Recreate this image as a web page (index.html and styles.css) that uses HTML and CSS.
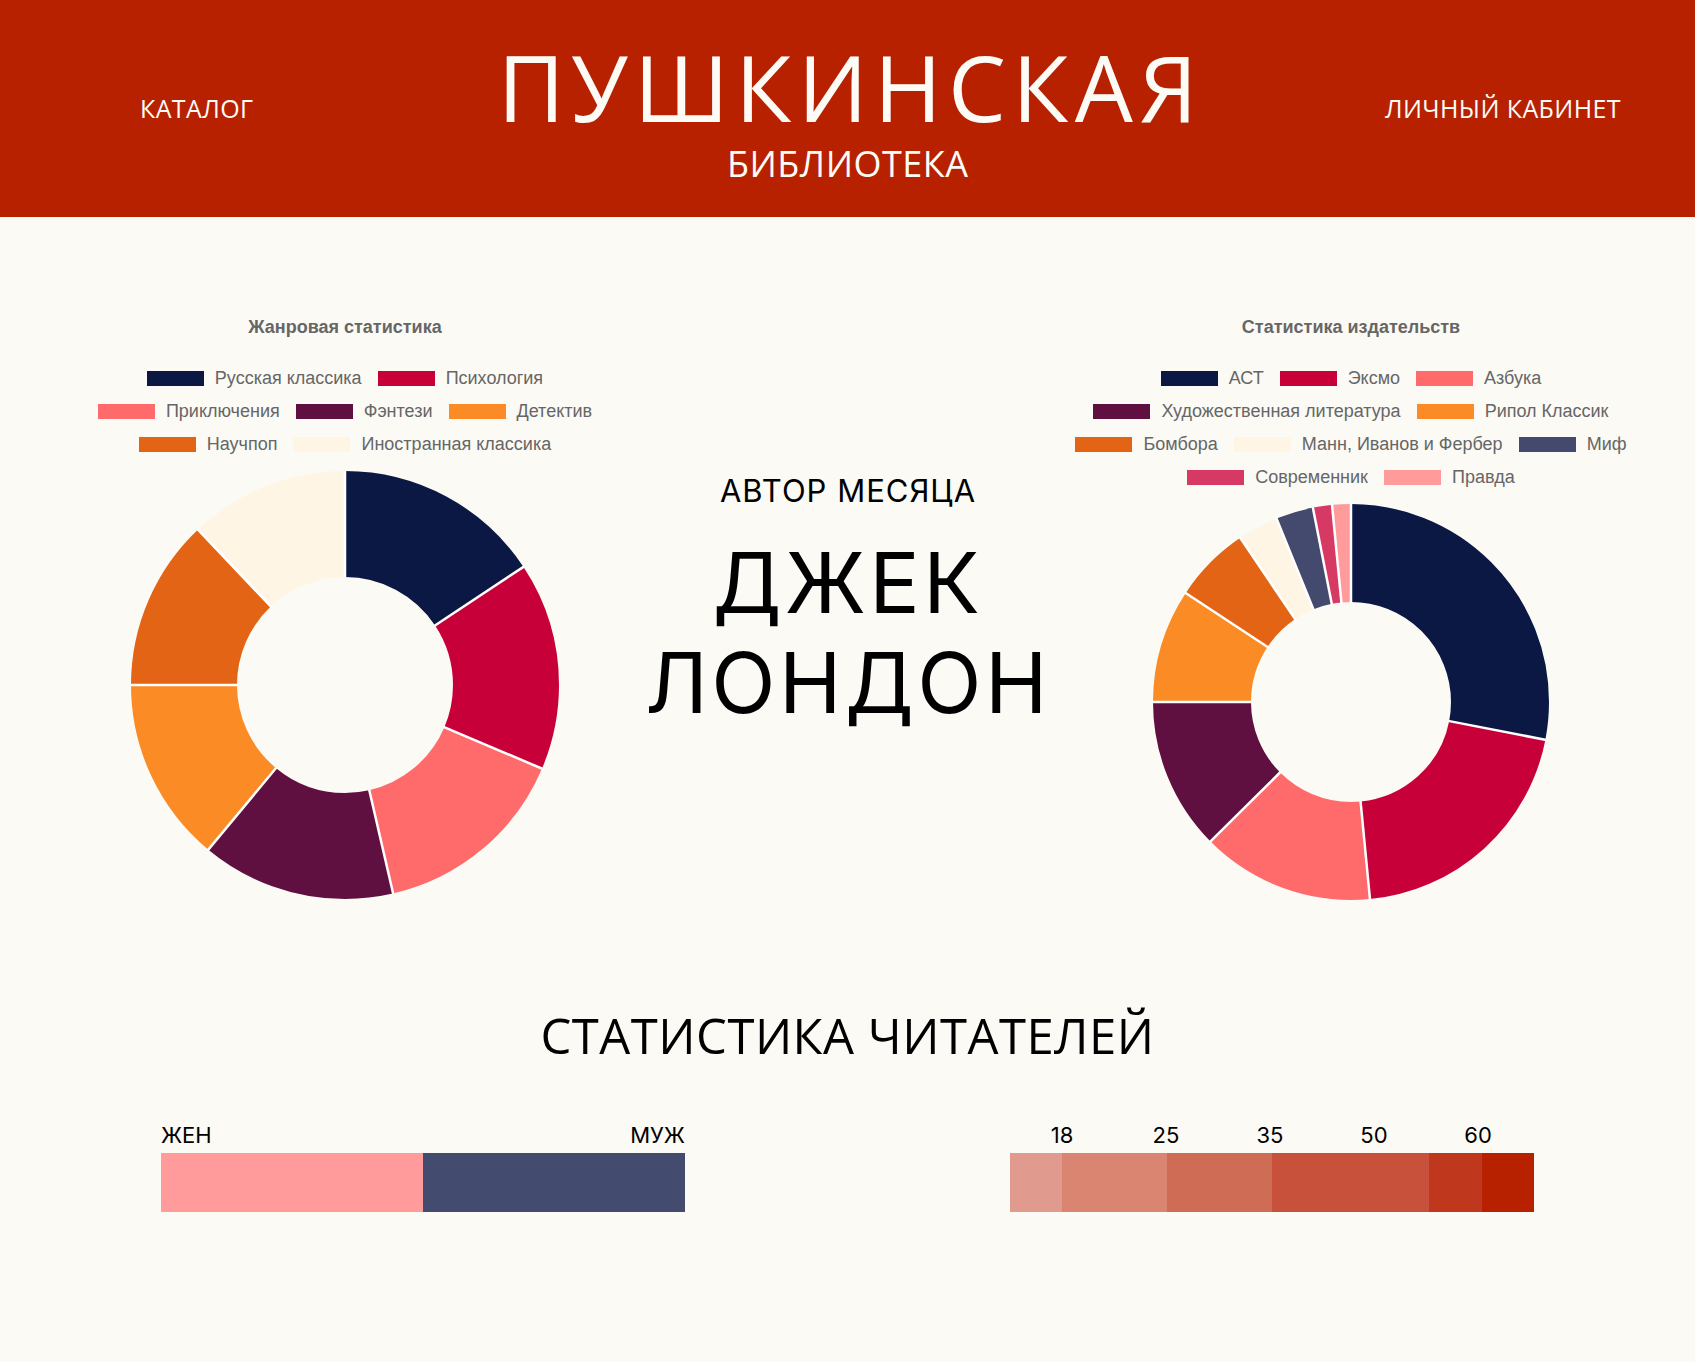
FILE: index.html
```html
<!DOCTYPE html>
<html lang="ru">
<head>
<meta charset="utf-8">
<title>Пушкинская библиотека</title>
<link rel="stylesheet" href="styles.css">
</head>
<body>
<header class="header">
  <a class="nav nav-left" href="#">КАТАЛОГ</a>
  <div class="brand">
    <div class="brand-title">ПУШКИНСКАЯ</div>
    <div class="brand-sub">БИБЛИОТЕКА</div>
  </div>
  <a class="nav nav-right" href="#">ЛИЧНЫЙ КАБИНЕТ</a>
</header>

<main>
  <section class="top">
    <div class="chart">
      <div class="chart-title">Жанровая статистика</div>
      <div class="legend">
        <div class="legend-row">
          <span class="legend-item"><i class="swatch c-navy"></i>Русская классика</span>
          <span class="legend-item"><i class="swatch c-red"></i>Психология</span>
        </div>
        <div class="legend-row">
          <span class="legend-item"><i class="swatch c-pink"></i>Приключения</span>
          <span class="legend-item"><i class="swatch c-purple"></i>Фэнтези</span>
          <span class="legend-item"><i class="swatch c-orange"></i>Детектив</span>
        </div>
        <div class="legend-row">
          <span class="legend-item"><i class="swatch c-dorange"></i>Научпоп</span>
          <span class="legend-item"><i class="swatch c-cream"></i>Иностранная классика</span>
        </div>
      </div>
      <svg class="donut" width="432" height="432" viewBox="0 0 432 432">
        <g transform="rotate(-90 216 216)" fill="none" stroke-width="106">
          <circle cx="216" cy="216" r="161" stroke="#0b1844" stroke-dasharray="158.77 1100" stroke-dashoffset="0"/>
          <circle cx="216" cy="216" r="161" stroke="#c70039" stroke-dasharray="158.77 1100" stroke-dashoffset="-158.77"/>
          <circle cx="216" cy="216" r="161" stroke="#ff6b6b" stroke-dasharray="151.74 1100" stroke-dashoffset="-317.54"/>
          <circle cx="216" cy="216" r="161" stroke="#5f0f40" stroke-dasharray="148.09 1100" stroke-dashoffset="-469.28"/>
          <circle cx="216" cy="216" r="161" stroke="#fb8b24" stroke-dasharray="141.34 1100" stroke-dashoffset="-617.37"/>
          <circle cx="216" cy="216" r="161" stroke="#e36414" stroke-dasharray="130.95 1100" stroke-dashoffset="-758.71"/>
          <circle cx="216" cy="216" r="161" stroke="#fff5e4" stroke-dasharray="121.96 1100" stroke-dashoffset="-889.66"/>
        </g>
        <g stroke="#ffffff" stroke-width="2.5">
          <line x1="216" y1="109" x2="216" y2="1"/>
          <line x1="216" y1="109" x2="216" y2="1" transform="rotate(56.5 216 216)"/>
          <line x1="216" y1="109" x2="216" y2="1" transform="rotate(113 216 216)"/>
          <line x1="216" y1="109" x2="216" y2="1" transform="rotate(167 216 216)"/>
          <line x1="216" y1="109" x2="216" y2="1" transform="rotate(219.7 216 216)"/>
          <line x1="216" y1="109" x2="216" y2="1" transform="rotate(270 216 216)"/>
          <line x1="216" y1="109" x2="216" y2="1" transform="rotate(316.6 216 216)"/>
        </g>
      </svg>
    </div>

    <div class="author">
      <div class="author-label">АВТОР МЕСЯЦА</div>
      <div class="author-name">ДЖЕК<br>ЛОНДОН</div>
    </div>

    <div class="chart">
      <div class="chart-title">Статистика издательств</div>
      <div class="legend">
        <div class="legend-row">
          <span class="legend-item"><i class="swatch c-navy"></i>АСТ</span>
          <span class="legend-item"><i class="swatch c-red"></i>Эксмо</span>
          <span class="legend-item"><i class="swatch c-pink"></i>Азбука</span>
        </div>
        <div class="legend-row">
          <span class="legend-item"><i class="swatch c-purple"></i>Художественная литература</span>
          <span class="legend-item"><i class="swatch c-orange"></i>Рипол Классик</span>
        </div>
        <div class="legend-row">
          <span class="legend-item"><i class="swatch c-dorange"></i>Бомбора</span>
          <span class="legend-item"><i class="swatch c-cream"></i>Манн, Иванов и Фербер</span>
          <span class="legend-item"><i class="swatch c-slate"></i>Миф</span>
        </div>
        <div class="legend-row">
          <span class="legend-item"><i class="swatch c-rose"></i>Современник</span>
          <span class="legend-item"><i class="swatch c-light"></i>Правда</span>
        </div>
      </div>
      <svg class="donut" width="400" height="400" viewBox="0 0 400 400">
        <g transform="rotate(-90 200 200)" fill="none" stroke-width="98">
          <circle cx="200" cy="200" r="149" stroke="#0b1844" stroke-dasharray="262.65 1000" stroke-dashoffset="0"/>
          <circle cx="200" cy="200" r="149" stroke="#c70039" stroke-dasharray="191.14 1000" stroke-dashoffset="-262.65"/>
          <circle cx="200" cy="200" r="149" stroke="#ff6b6b" stroke-dasharray="131.85 1000" stroke-dashoffset="-453.79"/>
          <circle cx="200" cy="200" r="149" stroke="#5f0f40" stroke-dasharray="116.50 1000" stroke-dashoffset="-585.64"/>
          <circle cx="200" cy="200" r="149" stroke="#fb8b24" stroke-dasharray="86.86 1000" stroke-dashoffset="-702.14"/>
          <circle cx="200" cy="200" r="149" stroke="#e36414" stroke-dasharray="58.77 1000" stroke-dashoffset="-789.00"/>
          <circle cx="200" cy="200" r="149" stroke="#fff5e4" stroke-dasharray="30.95 1000" stroke-dashoffset="-847.77"/>
          <circle cx="200" cy="200" r="149" stroke="#434a6e" stroke-dasharray="28.61 1000" stroke-dashoffset="-878.72"/>
          <circle cx="200" cy="200" r="149" stroke="#d63964" stroke-dasharray="14.56 1000" stroke-dashoffset="-907.33"/>
          <circle cx="200" cy="200" r="149" stroke="#ff9b9b" stroke-dasharray="14.30 1000" stroke-dashoffset="-921.89"/>
        </g>
        <g stroke="#ffffff" stroke-width="2.5">
          <line x1="200" y1="101" x2="200" y2="1"/>
          <line x1="200" y1="101" x2="200" y2="1" transform="rotate(101 200 200)"/>
          <line x1="200" y1="101" x2="200" y2="1" transform="rotate(174.5 200 200)"/>
          <line x1="200" y1="101" x2="200" y2="1" transform="rotate(225.2 200 200)"/>
          <line x1="200" y1="101" x2="200" y2="1" transform="rotate(270 200 200)"/>
          <line x1="200" y1="101" x2="200" y2="1" transform="rotate(303.4 200 200)"/>
          <line x1="200" y1="101" x2="200" y2="1" transform="rotate(326 200 200)"/>
          <line x1="200" y1="101" x2="200" y2="1" transform="rotate(337.9 200 200)"/>
          <line x1="200" y1="101" x2="200" y2="1" transform="rotate(348.9 200 200)"/>
          <line x1="200" y1="101" x2="200" y2="1" transform="rotate(354.5 200 200)"/>
        </g>
      </svg>
    </div>
  </section>

  <section class="readers">
    <h2 class="readers-title">СТАТИСТИКА ЧИТАТЕЛЕЙ</h2>
    <div class="bars">
      <div class="bar-block">
        <div class="gender-labels"><span>ЖЕН</span><span>МУЖ</span></div>
        <div class="bar">
          <span class="seg" style="width:50%; background:#ff9b9b"></span>
          <span class="seg" style="width:50%; background:#434b6e"></span>
        </div>
      </div>
      <div class="bar-block">
        <div class="age-labels"><span>18</span><span>25</span><span>35</span><span>50</span><span>60</span></div>
        <div class="bar">
          <span class="seg" style="width:10%; background:#e09b8e"></span>
          <span class="seg" style="width:20%; background:#d98571"></span>
          <span class="seg" style="width:20%; background:#cf6c56"></span>
          <span class="seg" style="width:30%; background:#c7513b"></span>
          <span class="seg" style="width:10%; background:#bf371c"></span>
          <span class="seg" style="width:10%; background:#b72100"></span>
        </div>
      </div>
    </div>
  </section>
</main>
</body>
</html>
```

FILE: styles.css
```css
* { box-sizing: border-box; margin: 0; padding: 0; }

body {
  background: #fbfaf5;
  color: #000;
  font-family: "Inter", "DejaVu Sans", sans-serif;
}

/* Header */
.header {
  height: 217px;
  background: #b72100;
  color: #fcfbf6;
  display: grid;
  grid-template-columns: 1fr auto 1fr;
  align-items: center;
}
.nav {
  font-family: "Open Sans", "Noto Sans", sans-serif;
  font-size: 25px;
  line-height: 25px;
  letter-spacing: 0.4px;
  color: #fcfbf6;
  text-decoration: none;
}
.nav-left { justify-self: start; padding-left: 140px; }
.nav-right { justify-self: end; padding-right: 74px; }

.brand {
  align-self: start;
  padding-top: 49px;
  text-align: center;
  font-family: "Open Sans", "Noto Sans", sans-serif;
}
.brand-title {
  font-size: 92px;
  line-height: 76px;
  letter-spacing: 6.3px;
  margin-right: -6.3px;
}
.brand-sub {
  font-size: 36px;
  line-height: 30px;
  margin-top: 24px;
  letter-spacing: 0.5px;
  margin-right: -0.5px;
}

/* Top section */
.top {
  display: grid;
  grid-template-columns: 560px 1fr 560px;
  padding: 0 64px 0 65px;
}
.chart {
  display: flex;
  flex-direction: column;
  align-items: center;
  padding-top: 99px;
}
.chart-title {
  font-family: "Liberation Sans", Arial, sans-serif;
  font-weight: 700;
  font-size: 18px;
  line-height: 22px;
  color: #666;
}
.legend {
  margin-top: 30px;
  display: flex;
  flex-direction: column;
  align-items: center;
  gap: 13px;
}
.legend-row {
  display: flex;
  gap: 16px;
  height: 20px;
}
.legend-item {
  display: flex;
  align-items: center;
  gap: 11px;
  font-family: "Liberation Sans", Arial, sans-serif;
  font-size: 18px;
  line-height: 20px;
  color: #666;
  white-space: nowrap;
}
.swatch {
  display: block;
  width: 57px;
  height: 15px;
}
.c-navy { background: #0b1844; }
.c-red { background: #c70039; }
.c-pink { background: #ff6b6b; }
.c-purple { background: #5f0f40; }
.c-orange { background: #fb8b24; }
.c-dorange { background: #e36414; }
.c-cream { background: #fff5e4; }
.c-slate { background: #434a6e; }
.c-rose { background: #d63964; }
.c-light { background: #ff9b9b; }

.donut {
  display: block;
  margin-top: 15px;
}

.author {
  text-align: center;
  padding-top: 258px;
}
.author-label {
  font-size: 31px;
  line-height: 31px;
  letter-spacing: 1px;
}
.author-name {
  margin-top: 27px;
  font-size: 84px;
  line-height: 100px;
  letter-spacing: 3.5px;
}

/* Readers */
.readers {
  padding-top: 107px;
}
.readers-title {
  font-family: "Open Sans", "Noto Sans", sans-serif;
  font-weight: 400;
  font-size: 49px;
  line-height: 52px;
  letter-spacing: 0.5px;
  text-align: center;
}
.bars {
  display: flex;
  justify-content: space-between;
  padding: 0 161px 0 161px;
  margin-top: 63px;
}
.bar-block { width: 524px; }
.gender-labels {
  display: flex;
  justify-content: space-between;
  font-size: 22px;
  line-height: 22px;
}
.age-labels {
  display: grid;
  grid-template-columns: repeat(5, 1fr);
  padding-right: 4px;
  text-align: center;
  font-size: 22px;
  line-height: 22px;
}
.bar {
  display: flex;
  height: 59px;
  margin-top: 7px;
}
.seg { display: block; height: 100%; }
```
